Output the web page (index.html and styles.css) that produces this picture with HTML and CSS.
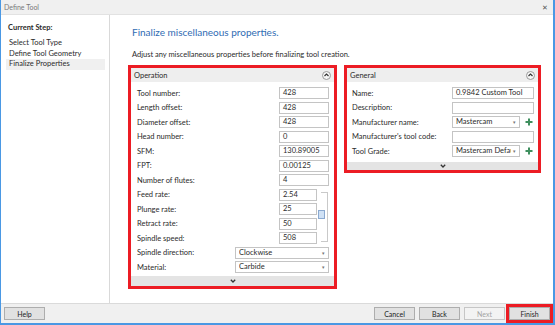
FILE: index.html
```html
<!DOCTYPE html>
<html lang="en">
<head>
    <meta charset="UTF-8">
    <title>Define Tool</title>
    <link rel="stylesheet" href="styles.css">
</head>
<body>
<div class="window">

    <div class="titlebar">
        <span class="title">Define Tool</span>
        <span class="close">&#x2715;</span>
    </div>

    <div class="content">
        <div class="sidebar">
            <div class="step-head">Current Step:</div>
            <div class="step">Select Tool Type</div>
            <div class="step">Define Tool Geometry</div>
            <div class="step current">Finalize Properties</div>
        </div>

        <div class="main">
            <h1>Finalize miscellaneous properties.</h1>
            <p class="intro">Adjust any miscellaneous properties before finalizing tool creation.</p>

            <div class="panels">
                <!-- Operation -->
                <div class="panel op">
                    <div class="panel-head">
                        <span>Operation</span>
                        <span class="collapse"><svg width="5" height="4" viewBox="0 0 5 4"><path d="M0.5 3 L2.5 1 L4.5 3" fill="none" stroke="#333" stroke-width="1.2"/></svg></span>
                    </div>
                    <div class="op-grid">
                        <label>Tool number:</label><div class="field wide">428</div>
                        <label>Length offset:</label><div class="field wide">428</div>
                        <label>Diameter offset:</label><div class="field wide">428</div>
                        <label>Head number:</label><div class="field wide">0</div>
                        <label>SFM:</label><div class="field wide">130.89005</div>
                        <label>FPT:</label><div class="field wide">0.00125</div>
                        <label>Number of flutes:</label><div class="field wide">4</div>
                        <label>Feed rate:</label><div class="field narrow">2.54</div>
                        <div class="slider"><div class="thumb"></div></div>
                        <label>Plunge rate:</label><div class="field narrow">25</div>
                        <label>Retract rate:</label><div class="field narrow">50</div>
                        <label>Spindle speed:</label><div class="field narrow">508</div>
                        <label>Spindle direction:</label><div class="field select full"><span class="val">Clockwise</span><span class="arrow">&#x25BE;</span></div>
                        <label>Material:</label><div class="field select full"><span class="val">Carbide</span><span class="arrow">&#x25BE;</span></div>
                    </div>
                    <div class="panel-foot"><svg width="6" height="4" viewBox="0 0 6 4"><path d="M0.8 0.8 L3 3 L5.2 0.8" fill="none" stroke="#333" stroke-width="1.3"/></svg></div>
                </div>

                <!-- General -->
                <div class="panel gen">
                    <div class="panel-head">
                        <span>General</span>
                        <span class="collapse"><svg width="5" height="4" viewBox="0 0 5 4"><path d="M0.5 3 L2.5 1 L4.5 3" fill="none" stroke="#333" stroke-width="1.2"/></svg></span>
                    </div>
                    <div class="gen-grid">
                        <label>Name:</label><div class="field wide">0.9842 Custom Tool</div>
                        <label>Description:</label><div class="field wide"></div>
                        <label>Manufacturer name:</label><div class="field select"><span class="val">Mastercam</span><span class="arrow">&#x25BE;</span></div>
                        <span class="plus"><svg width="8" height="8" viewBox="0 0 8 8"><path d="M4 0.5 V7.5 M0.5 4 H7.5" stroke="#3f8f5e" stroke-width="2"/></svg></span>
                        <label>Manufacturer's tool code:</label><div class="field wide"></div>
                        <label>Tool Grade:</label><div class="field select"><span class="val">Mastercam Default (</span><span class="arrow">&#x25BE;</span></div>
                        <span class="plus"><svg width="8" height="8" viewBox="0 0 8 8"><path d="M4 0.5 V7.5 M0.5 4 H7.5" stroke="#3f8f5e" stroke-width="2"/></svg></span>
                    </div>
                    <div class="panel-foot"><svg width="6" height="4" viewBox="0 0 6 4"><path d="M0.8 0.8 L3 3 L5.2 0.8" fill="none" stroke="#333" stroke-width="1.3"/></svg></div>
                </div>
            </div>
        </div>
    </div>

    <div class="footer">
        <button class="btn">Help</button>
        <div class="spacer"></div>
        <button class="btn">Cancel</button>
        <button class="btn">Back</button>
        <button class="btn" disabled>Next</button>
        <button class="btn finish">Finish</button>
    </div>

</div>
</body>
</html>
```

FILE: styles.css
```css
body {
    margin: 0;
    font-family: "Segoe UI", Lato, "Open Sans", sans-serif;
    font-size: 7.5px;
    color: #2b2b2b;
    background: #fff;
}

.window {
    width: 555px;
    height: 325px;
    box-sizing: border-box;
    display: flex;
    flex-direction: column;
    border-left: 1px solid #4a98e4;
    border-right: 2px solid #4a98e4;
    border-bottom: 2px solid #4a98e4;
}

/* title bar */
.titlebar {
    height: 15px;
    flex: none;
    display: flex;
    align-items: center;
    justify-content: space-between;
    background: #f0f0f0;
    border-bottom: 1px solid #e2e2e2;
    box-sizing: border-box;
    padding: 0 5px 0 3px;
}

.title {
    color: #7a7a7a;
    font-size: 7px;
}

.close {
    color: #555;
    font-size: 7px;
}

.content {
    flex: 1;
    display: flex;
    min-height: 0;
}

/* steps */
.sidebar {
    width: 109px;
    flex: none;
    border-right: 1px solid #d9d9d9;
    padding: 8px 4px 0 5px;
    box-sizing: border-box;
}

.step-head {
    font-weight: bold;
    height: 10px;
    line-height: 10px;
    margin-left: 2px;
    margin-bottom: 5px;
}

.step {
    height: 10.5px;
    line-height: 10.5px;
    padding-left: 3px;
}

.step.current {
    background: #f0f0f0;
}

/* main area */
.main {
    flex: 1;
    padding: 0 0 0 18px;
}

h1 {
    font-size: 10px;
    font-weight: normal;
    color: #2f6cb3;
    margin: 10px 0 0 4px;
    height: 14px;
    line-height: 14px;
}

.intro {
    margin: 11px 0 0 4px;
    height: 10px;
    line-height: 10px;
}

.panels {
    display: flex;
    align-items: flex-start;
    gap: 7px;
    margin-top: 5px;
}

.panel {
    border: 3px solid #ec1c24;
    background: #fff;
    box-sizing: border-box;
}

.panel.op {
    width: 209px;
}

.panel.gen {
    width: 197px;
}

.panel-head {
    height: 14px;
    background: #eeeeee;
    display: flex;
    align-items: center;
    justify-content: space-between;
    padding: 0 3px;
}

.collapse {
    width: 7px;
    height: 7px;
    border: 1px solid #9a9a9a;
    border-radius: 50%;
    display: flex;
    align-items: center;
    justify-content: center;
    background: #f7f7f7;
}

.op-grid {
    display: grid;
    grid-template-columns: 1fr 44px 38px 12px;
    grid-auto-rows: 12px;
    row-gap: 2.5px;
    align-items: center;
    padding: 5px 5px 3px 6px;
}

.gen-grid {
    display: grid;
    grid-template-columns: 1fr 68px 14px;
    grid-auto-rows: 12px;
    row-gap: 2.5px;
    align-items: center;
    padding: 5px 4px 5px 5px;
}

label {
    grid-column: 1;
    white-space: nowrap;
}

.field {
    height: 12px;
    box-sizing: border-box;
    border: 1px solid #c4c4c4;
    background: #fff;
    padding-left: 3px;
    line-height: 10px;
    white-space: nowrap;
    overflow: hidden;
}

.field.select {
    display: flex;
    padding-right: 3px;
}

.val {
    flex: 1;
    overflow: hidden;
    white-space: nowrap;
}

.op-grid .field.wide {
    grid-column: 3 / 5;
}

.op-grid .field.narrow {
    grid-column: 3;
}

.op-grid .field.full {
    grid-column: 2 / 5;
}

.gen-grid .field.wide {
    grid-column: 2 / 4;
}

.gen-grid .field.select {
    grid-column: 2;
}

.arrow {
    flex: none;
    font-size: 5px;
    color: #777;
    padding-left: 2px;
}

.plus {
    grid-column: 3;
    display: flex;
    justify-content: flex-end;
    padding-right: 1px;
}

.slider {
    grid-column: 4;
    grid-row: 8 / 12;
    align-self: stretch;
    margin: 3px 1px 2px 4px;
    border: 1px solid #c9c9c9;
    border-left: none;
    position: relative;
}

.thumb {
    position: absolute;
    left: -3px;
    top: 17px;
    width: 7px;
    height: 9px;
    box-sizing: border-box;
    border: 1px solid #8aa9d0;
    background: #cfe1f5;
}

.panel-foot {
    height: 10px;
    background: #e4e4e4;
    display: flex;
    align-items: center;
    justify-content: center;
}

.panel.gen .panel-foot {
    height: 8px;
}

/* bottom buttons */
.footer {
    height: 20px;
    flex: none;
    box-sizing: border-box;
    background: #f0f0f0;
    border-top: 1px solid #dadada;
    display: flex;
    align-items: center;
    gap: 4px;
    padding: 0 3px 0 3px;
}

.spacer {
    flex: 1;
}

.btn {
    width: 41px;
    height: 13px;
    padding: 0;
    font: inherit;
    font-size: 7px;
    color: #222;
    background: #e1e1e1;
    border: 1px solid #adadad;
}

.btn:disabled {
    background: #f3f3f3;
    border-color: #c6c6c6;
    color: #a4a4a4;
}

.btn.finish {
    outline: 3px solid #ec1c24;
    outline-offset: 0;
}
```
